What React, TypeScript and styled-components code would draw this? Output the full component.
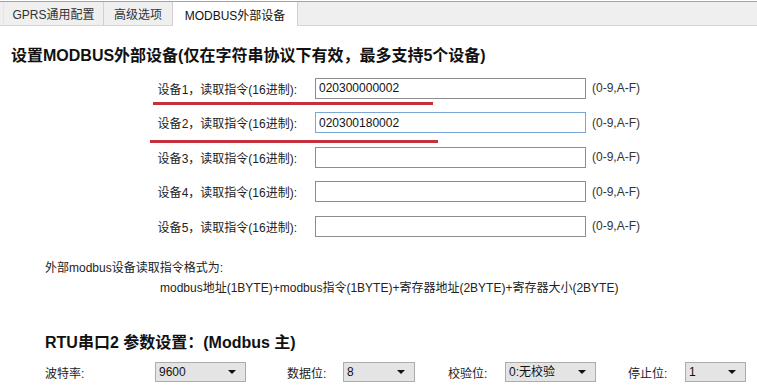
import React from "react";
import styled, { createGlobalStyle } from "styled-components";

const GlobalStyle = createGlobalStyle`
    html, body {
        margin: 0;
        padding: 0;
        background: #ffffff;
    }
    body {
        font-family: "Liberation Sans", "Noto Sans CJK SC", sans-serif;
        font-size: 12px;
        color: #222222;
    }
`;

const Page = styled.div`
    width: 757px;
    height: 391px;
    overflow: hidden;
    padding-top: 1px;
    box-sizing: border-box;
`;

const TabBar = styled.div`
    display: flex;
    height: 23px;
    background: #efefef;
    border-top: 1px solid #a3a3a3;
    border-bottom: 1px solid #d6d6d6;
`;

const Tab = styled.div<{ $active?: boolean; $width: number }>`
    width: ${(p) => p.$width}px;
    display: flex;
    align-items: center;
    justify-content: center;
    box-sizing: border-box;
    border-left: 1px solid #d0d0d0;
    background: ${(p) => (p.$active ? "#ffffff" : "transparent")};
    color: ${(p) => (p.$active ? "#111" : "#333")};
    margin-bottom: ${(p) => (p.$active ? "-1px" : "0")};
    &:first-child {
        border-left: 1px solid #e4e4e4;
        margin-left: 3px;
    }
    &:last-child {
        border-right: 1px solid #d0d0d0;
    }
`;

const Heading = styled.h2<{ $indent: number; $top: number }>`
    margin: ${(p) => p.$top}px 0 0 ${(p) => p.$indent}px;
    font-size: 16px;
    line-height: 20px;
    font-weight: bold;
    color: #111;
`;

const DeviceGrid = styled.div`
    position: relative;
    margin-top: 4.75px;
    display: grid;
    grid-template-columns: 315px 271px auto;
    grid-auto-rows: 34.5px;
    align-items: center;
`;

const DeviceLabel = styled.label`
    text-align: right;
    padding-right: 18px;
    white-space: nowrap;
    color: #222;
`;

const HexInput = styled.input<{ $focused?: boolean }>`
    box-sizing: border-box;
    width: 271px;
    height: 21px;
    padding: 0 3px;
    font-family: "Liberation Sans", "Noto Sans CJK SC", sans-serif;
    font-size: 12px;
    color: #111;
    outline: none;
    border: 1px solid ${(p) => (p.$focused ? "#7aa7d6" : "#8c8c8c")};
    background: #fff;
`;

const Hint = styled.span`
    margin-left: 6px;
    color: #333;
    white-space: nowrap;
`;

const RedMark = styled.div<{ $top: number; $left: number; $width: number }>`
    position: absolute;
    top: ${(p) => p.$top}px;
    left: ${(p) => p.$left}px;
    width: ${(p) => p.$width}px;
    height: 3px;
    background: #c4303b;
`;

const FormatNote = styled.div`
    margin-top: 14.75px;
    line-height: 20px;
    color: #222;
`;

const NoteLine = styled.div<{ $indent: number }>`
    padding-left: ${(p) => p.$indent}px;
    white-space: nowrap;
`;

const SelectRow = styled.div`
    margin: 9px 0 0 45px;
    display: grid;
    grid-template-columns: 242px 161px 180px auto;
    align-items: center;
`;

const Field = styled.div`
    display: flex;
    align-items: center;
`;

const FieldLabel = styled.span<{ $width: number }>`
    width: ${(p) => p.$width}px;
    white-space: nowrap;
    color: #222;
`;

const SelectBox = styled.label<{ $width: number }>`
    position: relative;
    display: flex;
    align-items: center;
    box-sizing: border-box;
    width: ${(p) => p.$width}px;
    height: 20px;
    background: #e4e4e4;
    border: 1px solid #acacac;
`;

const NativeSelect = styled.select`
    appearance: none;
    flex: 1;
    height: 100%;
    border: none;
    background: transparent;
    padding: 0 0 0 3px;
    font-family: "Liberation Sans", "Noto Sans CJK SC", sans-serif;
    font-size: 12px;
    color: #111;
    outline: none;
`;

const Arrow = styled.span`
    width: 0;
    height: 0;
    margin-right: 9px;
    border-left: 4px solid transparent;
    border-right: 4px solid transparent;
    border-top: 4px solid #111;
    pointer-events: none;
`;

const devices = ["020300000002", "020300180002", "", "", ""];

const selects = [
    { label: "波特率:", labelWidth: 110, width: 91, value: "9600", options: ["1200", "2400", "4800", "9600", "19200", "38400", "57600", "115200"] },
    { label: "数据位:", labelWidth: 56, width: 72, value: "8", options: ["7", "8"] },
    { label: "校验位:", labelWidth: 57, width: 91, value: "0:无校验", options: ["0:无校验", "1:奇校验", "2:偶校验"] },
    { label: "停止位:", labelWidth: 57, width: 61, value: "1", options: ["1", "2"] },
];

const App = () => {
    return (
        <Page>
            <GlobalStyle />
            <TabBar>
                <Tab $width={100}>GPRS通用配置</Tab>
                <Tab $width={69}>高级选项</Tab>
                <Tab $width={126} $active>
                    MODBUS外部设备
                </Tab>
            </TabBar>

            <Heading $indent={11} $top={20}>
                设置MODBUS外部设备(仅在字符串协议下有效，最多支持5个设备)
            </Heading>

            <DeviceGrid>
                {devices.map((value, index) => (
                    <React.Fragment key={index}>
                        <DeviceLabel htmlFor={`dev${index + 1}`}>
                            设备{index + 1}，读取指令(16进制):
                        </DeviceLabel>
                        <HexInput
                            id={`dev${index + 1}`}
                            defaultValue={value}
                            $focused={index === 1}
                        />
                        <Hint>(0-9,A-F)</Hint>
                    </React.Fragment>
                ))}
                {/* annotation marks drawn over the first two rows */}
                <RedMark $top={31.5} $left={153} $width={280} />
                <RedMark $top={69.5} $left={150} $width={288} />
            </DeviceGrid>

            <FormatNote>
                <NoteLine $indent={45}>外部modbus设备读取指令格式为:</NoteLine>
                <NoteLine $indent={160}>
                    modbus地址(1BYTE)+modbus指令(1BYTE)+寄存器地址(2BYTE)+寄存器大小(2BYTE)
                </NoteLine>
            </FormatNote>

            <Heading $indent={45} $top={35}>
                RTU串口2 参数设置：(Modbus 主)
            </Heading>

            <SelectRow>
                {selects.map((s) => (
                    <Field key={s.label}>
                        <FieldLabel $width={s.labelWidth}>{s.label}</FieldLabel>
                        <SelectBox $width={s.width}>
                            <NativeSelect defaultValue={s.value}>
                                {s.options.map((o) => (
                                    <option key={o} value={o}>
                                        {o}
                                    </option>
                                ))}
                            </NativeSelect>
                            <Arrow />
                        </SelectBox>
                    </Field>
                ))}
            </SelectRow>
        </Page>
    );
};

export default App;
